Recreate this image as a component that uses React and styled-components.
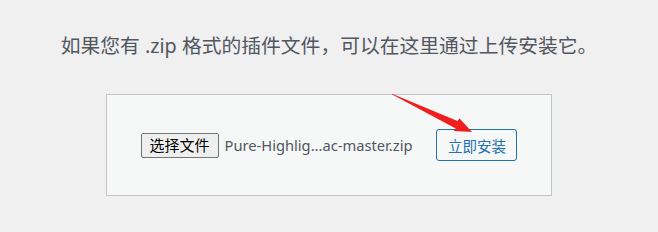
import React from "react";
import styled, { createGlobalStyle } from "styled-components";

const GlobalStyle = createGlobalStyle`
  html, body {
    margin: 0;
    padding: 0;
    background: #f0f0f1;
  }
`;

const cjk = `"Noto Sans", "Noto Sans CJK SC", sans-serif`;

const App = () => (
  <>
    <GlobalStyle />
    <Page>
      <Intro>如果您有 .zip 格式的插件文件，可以在这里通过上传安装它。</Intro>
      <UploadBox>
        <FileGroup>
          <ChooseButton type="button">选择文件</ChooseButton>
          <FileName>Pure-Highlig...ac-master.zip</FileName>
        </FileGroup>
        <InstallButton type="button">立即安装</InstallButton>
        <Arrow width="100" height="60" viewBox="380 90 100 60">
          <polygon
            points="393,93.7 393.2,94.4 456.7,128.5 454.6,131 473,132 460.6,118.4 458.5,120.9"
            fill="#f01e1e"
          />
        </Arrow>
      </UploadBox>
    </Page>
  </>
);

//===== Styles
const Page = styled.div`
  width: 658px;
  height: 232px;
  overflow: hidden;
  padding-top: 32px;
  box-sizing: border-box;
`;

const Intro = styled.p`
  margin: 0 0 34px;
  font-family: ${cjk};
  font-size: 19.8px;
  line-height: 28px;
  color: #50575e;
  text-align: center;
`;

const UploadBox = styled.div`
  position: relative;
  box-sizing: border-box;
  width: 446px;
  height: 102px;
  margin: 0 auto;
  background: #f6f7f7;
  border: 1px solid #c3c4c7;
  display: flex;
  align-items: center;
  justify-content: center;
  gap: 24px;
`;

const FileGroup = styled.div`
  display: flex;
  align-items: center;
  gap: 6px;
`;

const ChooseButton = styled.button`
  box-sizing: border-box;
  width: 78px;
  height: 25px;
  padding: 0;
  font-family: ${cjk};
  font-size: 15px;
  color: #000;
  background: #efefef;
  border: 1px solid #767676;
  border-radius: 2px;
  line-height: 1;
`;

const FileName = styled.span`
  font-family: ${cjk};
  font-size: 14.7px;
  color: #50575e;
  white-space: nowrap;
`;

const InstallButton = styled.button`
  box-sizing: border-box;
  width: 81px;
  height: 32px;
  padding: 0;
  font-family: ${cjk};
  font-size: 14.5px;
  color: #2271b1;
  background: #f6f7f7;
  border: 1px solid #2271b1;
  border-radius: 3px;
`;

const Arrow = styled.svg`
  position: absolute;
  left: 272px;
  top: -5px;
  overflow: visible;
  pointer-events: none;
`;

export default App;
